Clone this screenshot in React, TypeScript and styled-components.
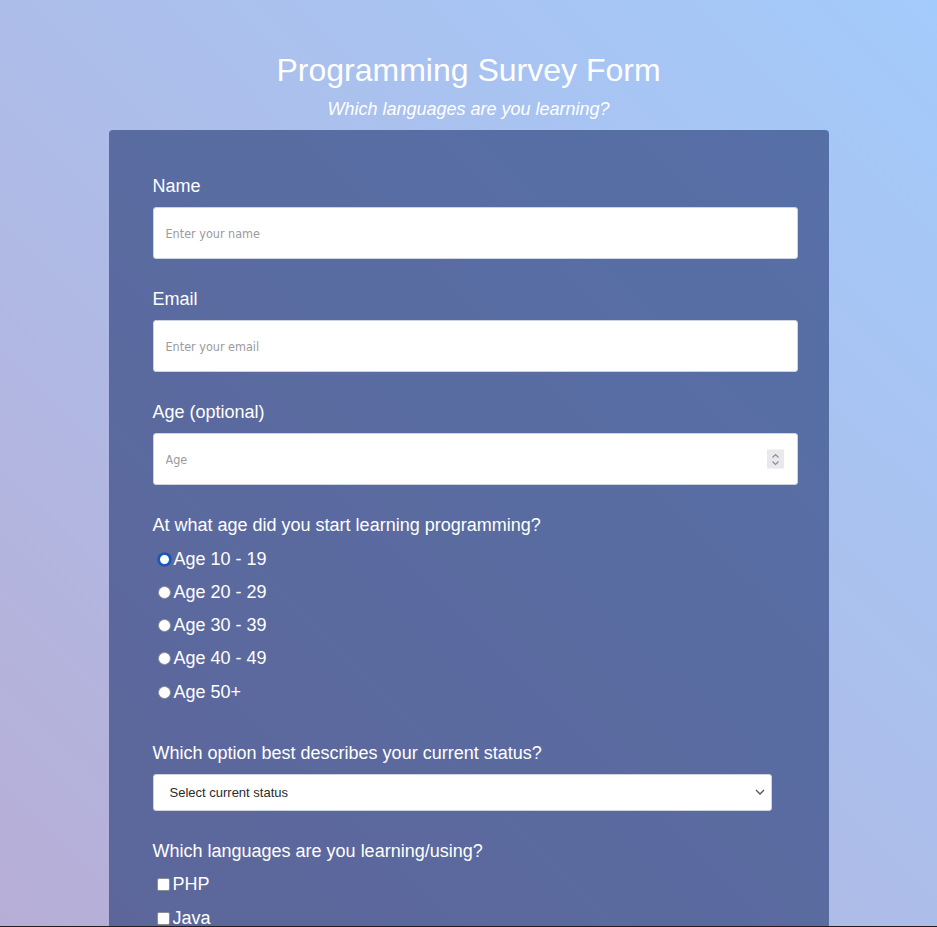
import React from "react";
import styled, { createGlobalStyle } from "styled-components";

const GlobalStyle = createGlobalStyle`
  html, body { margin: 0; padding: 0; }
  body {
    margin: 8px;
    font-family: "Liberation Sans", Arial, sans-serif;
    color: #ffffff;
    background: linear-gradient(to top right, #b7aed6 0%, #adbde9 50%, #a3cbfb 100%);
    background-attachment: fixed;
    min-height: 100vh;
  }
  * { box-sizing: border-box; }
`;

const Page = styled.div`
  display: flex;
  flex-direction: column;
  align-items: center;
`;

const Header = styled.header`
  text-align: center;
  padding-top: 43.5px;
`;

const Title = styled.h1`
  margin: 0;
  font-size: 32px;
  font-weight: 400;
  line-height: 37px;
`;

const Subtitle = styled.p`
  margin: 10px 0 0;
  font-size: 18px;
  font-style: italic;
  line-height: 21px;
`;

const Form = styled.form`
  width: 720px;
  margin-top: 10.5px;
  padding: 46px 31px 60px 44px;
  border-radius: 4px;
  background: rgba(34, 53, 113, 0.6);
`;

const Group = styled.div`
  margin-bottom: 30px;
`;

const Label = styled.label`
  display: block;
  margin: 0;
  font-size: 18px;
  line-height: 21px;
`;

const Field = styled.div`
  position: relative;
  margin-top: 10px;
`;

const TextInput = styled.input`
  display: block;
  width: 100%;
  height: 52px;
  padding: 16px 13px 16px 12px;
  border: 1px solid #cfd3df;
  border-radius: 3px;
  background: #ffffff;
  font-family: "DejaVu Sans Condensed", "Liberation Sans", Arial, sans-serif;
  font-size: 12.5px;
  color: #333;
  outline: none;
  -moz-appearance: textfield;
  &::placeholder { color: #9c9a9e; }
  &::-webkit-inner-spin-button,
  &::-webkit-outer-spin-button {
    -webkit-appearance: none;
    margin: 0;
  }
`;

const Spinner = styled.span`
  position: absolute;
  right: 14px;
  top: 50%;
  transform: translateY(-50%);
  width: 17px;
  height: 19px;
  background: #e8e8ed;
  display: flex;
  align-items: center;
  justify-content: center;
  pointer-events: none;
`;

const Select = styled.select`
  display: block;
  width: 96%;
  height: 37px;
  margin: 9.5px 0 2px;
  padding: 0 24px 0 16px;
  border: 1px solid #cfd3df;
  border-radius: 3px;
  appearance: none;
  -webkit-appearance: none;
  background-color: #ffffff;
  background-image: url("data:image/svg+xml;utf8,<svg xmlns='http://www.w3.org/2000/svg' width='10' height='6' viewBox='0 0 10 6'><path d='M1 1l4 4 4-4' fill='none' stroke='%23555' stroke-width='1.3'/></svg>");
  background-repeat: no-repeat;
  background-position: right 6px center;
  font-family: "Liberation Sans", Arial, sans-serif;
  font-size: 13px;
  color: #2a2a2a;
`;

const OptionList = styled.div<{ $extra?: number }>`
  display: flex;
  flex-direction: column;
  margin-top: 6.5px;
  padding-bottom: ${(p) => p.$extra ?? 0}px;
`;

const OptionRow = styled.label`
  display: flex;
  align-items: center;
  height: 33.25px;
  font-size: 18px;
  line-height: 21px;
`;

const Radio = styled.input`
  appearance: none;
  -webkit-appearance: none;
  width: 13px;
  height: 13px;
  margin: 0 3px 0 5px;
  border-radius: 50%;
  border: 1.5px solid #8d8d94;
  background: #ffffff;
  &:checked {
    border: 2.5px solid #0b5fd6;
    box-shadow: 0 0 0 0.5px rgba(16, 24, 60, 0.5);
  }
`;

const Check = styled.input`
  appearance: none;
  -webkit-appearance: none;
  width: 13px;
  height: 13px;
  margin: 0 3px 0 4px;
  border-radius: 2px;
  border: 1.5px solid #8d8d94;
  background: #ffffff;
`;

const TextArea = styled.textarea`
  display: block;
  width: 100%;
  height: 120px;
  margin-top: 10px;
  padding: 12px;
  border: 1px solid #cfd3df;
  border-radius: 3px;
  font-family: "Liberation Sans", Arial, sans-serif;
  font-size: 12px;
`;

const Submit = styled.button`
  display: block;
  width: 100%;
  height: 44px;
  border: none;
  border-radius: 3px;
  background: #3d4f8f;
  color: #fff;
  font-family: "Liberation Sans", Arial, sans-serif;
  font-size: 16px;
`;

const BottomEdge = styled.div`
  position: fixed;
  left: 0;
  right: 0;
  bottom: 0;
  height: 1px;
  background: #1e1e24;
`;

const ages = ["Age 10 - 19", "Age 20 - 29", "Age 30 - 39", "Age 40 - 49", "Age 50+"];
const langs = ["PHP", "Java", "Python", "JavaScript", "C++", "C#", "Ruby"];

export default function App() {
  return (
    <>
      <GlobalStyle />
      <Page>
        <Header>
          <Title id="title">Programming Survey Form</Title>
          <Subtitle id="description">Which languages are you learning?</Subtitle>
        </Header>
        <Form id="survey-form" onSubmit={(e) => e.preventDefault()}>
          <Group>
            <Label htmlFor="name">Name</Label>
            <Field>
              <TextInput id="name" type="text" placeholder="Enter your name" />
            </Field>
          </Group>
          <Group>
            <Label htmlFor="email">Email</Label>
            <Field>
              <TextInput id="email" type="email" placeholder="Enter your email" />
            </Field>
          </Group>
          <Group>
            <Label htmlFor="number">Age (optional)</Label>
            <Field>
              <TextInput id="number" type="number" placeholder="Age" />
              <Spinner>
                <svg width="9" height="14" viewBox="0 0 9 14">
                  <path d="M1.5 5l3-3 3 3M1.5 9l3 3 3-3" fill="none" stroke="#8a8a92" strokeWidth="1.1" />
                </svg>
              </Spinner>
            </Field>
          </Group>
          <Group>
            <Label as="p">At what age did you start learning programming?</Label>
            <OptionList $extra={4.5}>
              {ages.map((a, i) => (
                <OptionRow key={a}>
                  <Radio type="radio" name="age" value={a} defaultChecked={i === 0} />
                  {a}
                </OptionRow>
              ))}
            </OptionList>
          </Group>
          <Group>
            <Label htmlFor="dropdown">Which option best describes your current status?</Label>
            <Select id="dropdown" defaultValue="">
              <option value="" disabled>Select current status</option>
              <option value="student">Student</option>
              <option value="job">Full Time Job</option>
              <option value="learner">Full Time Learner</option>
              <option value="other">Other</option>
            </Select>
          </Group>
          <Group>
            <Label as="p">Which languages are you learning/using?</Label>
            <OptionList>
              {langs.map((l) => (
                <OptionRow key={l}>
                  <Check type="checkbox" value={l} />
                  {l}
                </OptionRow>
              ))}
            </OptionList>
          </Group>
          <Group>
            <Label htmlFor="comments">Any comments or suggestions?</Label>
            <TextArea id="comments" placeholder="Enter your comment here..." />
          </Group>
          <Submit id="submit" type="submit">Submit</Submit>
        </Form>
      </Page>
      <BottomEdge />
    </>
  );
}
